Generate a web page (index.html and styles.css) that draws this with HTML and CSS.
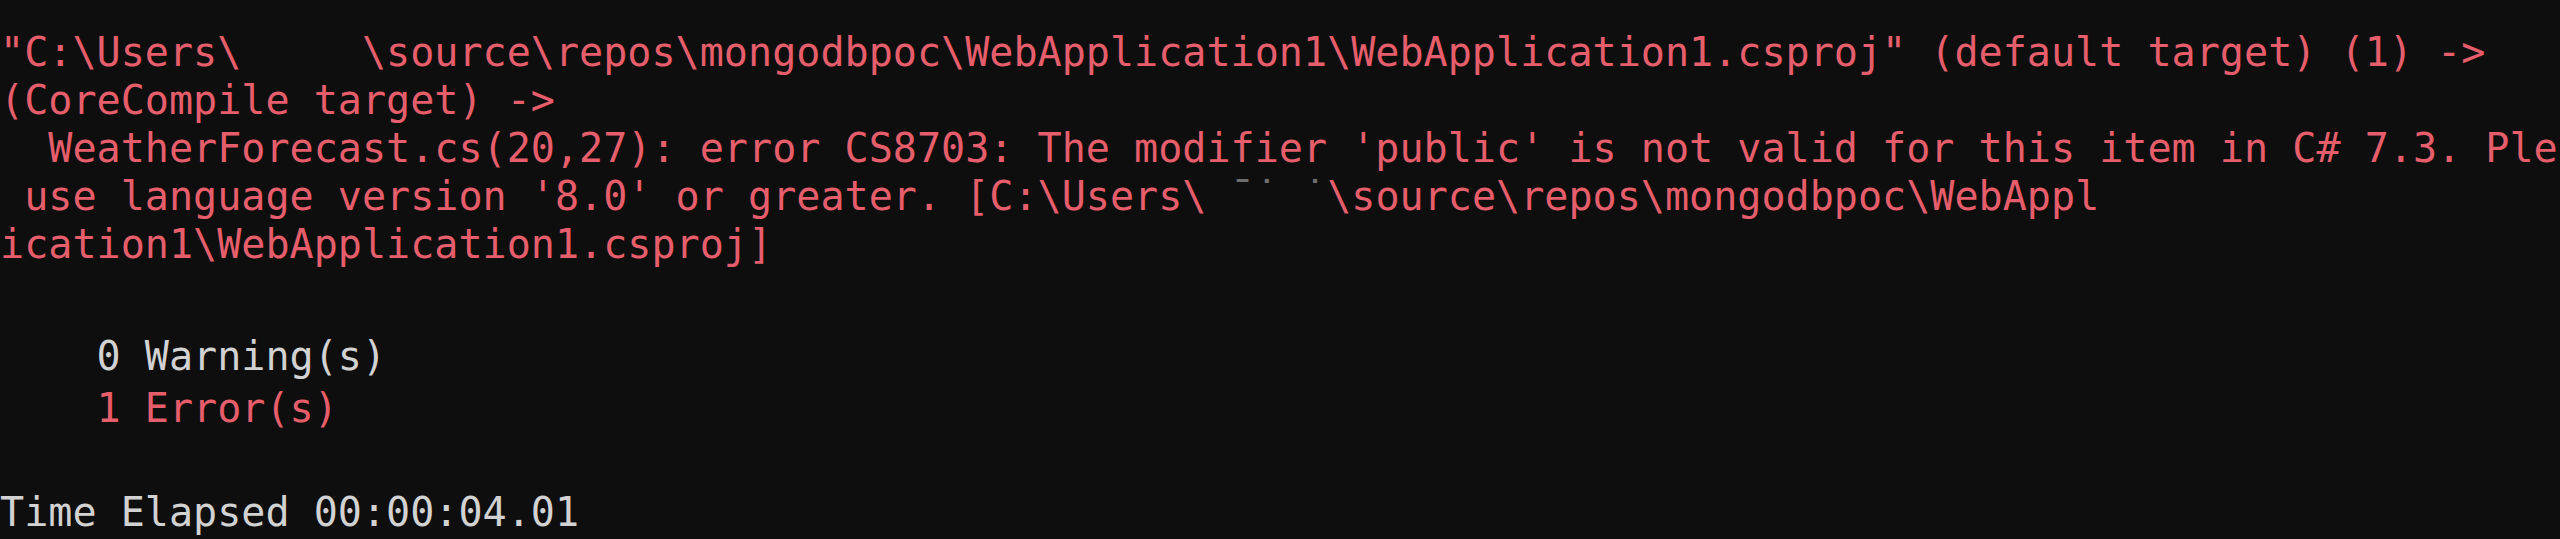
FILE: index.html
```html
<!DOCTYPE html>
<html lang="en">
<head>
    <meta charset="UTF-8">
    <meta name="viewport" content="width=device-width, initial-scale=1.0">
    <title>Build output</title>
    <link rel="stylesheet" href="styles.css">
</head>
<body>
    <div class="console">
        <div class="block">
            <div class="line error">"C:\Users\     \source\repos\mongodbpoc\WebApplication1\WebApplication1.csproj" (default target) (1) -&gt;</div>
            <div class="line error">(CoreCompile target) -&gt;</div>
            <div class="line error">  WeatherForecast.cs(20,27): error CS8703: The modifier 'public' is not valid for this item in C# 7.3. Ple</div>
            <div class="line error"> use language version '8.0' or greater. [C:\Users\<span class="smudge"> ¯˙ ˙</span>\source\repos\mongodbpoc\WebAppl</div>
            <div class="line error">ication1\WebApplication1.csproj]</div>
        </div>
        <div class="summary">
            <div class="line">    0 Warning(s)</div>
            <div class="line error">    1 Error(s)</div>
            <div class="line"> </div>
            <div class="line">Time Elapsed 00:00:04.01</div>
        </div>
    </div>
</body>
</html>
```

FILE: styles.css
```css
* {
    margin: 0;
    padding: 0;
    box-sizing: border-box;
}

html, body {
    background-color: #0e0e0e;
    height: 100%;
    overflow: hidden;
}

.console {
    padding-top: 28px;
    font-family: 'DejaVu Sans Mono', monospace;
    font-size: 40.1px;
    color: #d2d2d2;
}

.line {
    white-space: pre;
}

.block .line {
    height: 48px;
    line-height: 48px;
}

.summary {
    margin-top: 62px;
}

.summary .line {
    height: 52px;
    line-height: 52px;
}

.error {
    color: #e65e6b;
}

.smudge {
    color: #6e6e6e;
}
```
